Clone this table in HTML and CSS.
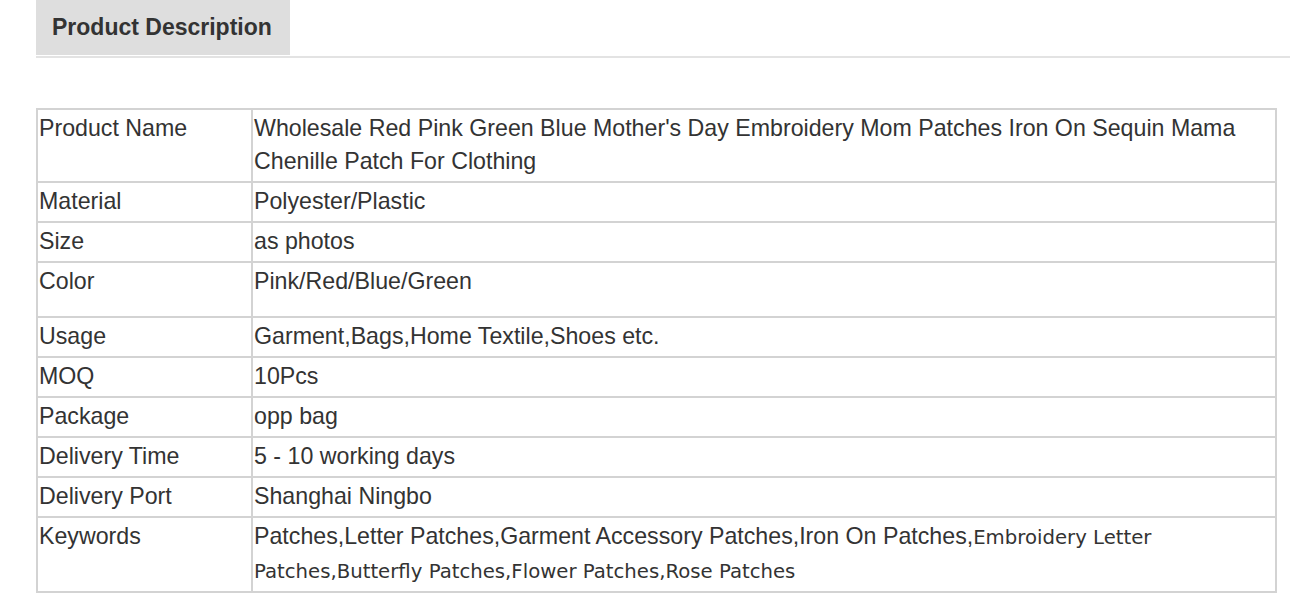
FILE: index.html
```html
<!DOCTYPE html>
<html>
<head>
<meta charset="utf-8">
<link rel="stylesheet" href="styles.css">
</head>
<body>
<div class="page">
  <div class="tabs">
    <div class="tab">Product Description</div>
  </div>
  <table class="spec">
    <tr class="r2"><td class="k">Product Name</td><td>Wholesale Red Pink Green Blue Mother's Day Embroidery Mom Patches Iron On Sequin Mama Chenille Patch For Clothing</td></tr>
    <tr><td class="k">Material</td><td>Polyester/Plastic</td></tr>
    <tr><td class="k">Size</td><td>as photos</td></tr>
    <tr class="tall"><td class="k">Color</td><td>Pink/Red/Blue/Green</td></tr>
    <tr><td class="k">Usage</td><td>Garment,Bags,Home Textile,Shoes etc.</td></tr>
    <tr><td class="k">MOQ</td><td>10Pcs</td></tr>
    <tr><td class="k">Package</td><td>opp bag</td></tr>
    <tr><td class="k">Delivery Time</td><td>5 - 10 working days</td></tr>
    <tr><td class="k">Delivery Port</td><td>Shanghai Ningbo</td></tr>
    <tr class="r2"><td class="k">Keywords</td><td>Patches,Letter Patches,Garment Accessory Patches,Iron On Patches,<span class="alt">Embroidery Letter Patches,Butterfly Patches,Flower Patches,Rose Patches</span></td></tr>
  </table>
</div>
</body>
</html>
```
FILE: styles.css
```css
html, body {
  margin: 0;
  padding: 0;
  background: #fff;
}
.page {
  padding-left: 36px;
  font-family: "Liberation Sans", Arial, sans-serif;
  color: #333;
}
.tabs {
  border-bottom: 2px solid #e3e3e3;
  height: 56px;
  margin-bottom: 50px;
}
.tab {
  display: inline-block;
  box-sizing: border-box;
  width: 254px;
  height: 55px;
  background: #dedede;
  font-weight: bold;
  font-size: 23px;
  line-height: 55px;
  padding-left: 16px;
  color: #333;
}
.spec {
  border-collapse: collapse;
  width: 1241px;
  font-size: 23.2px;
  line-height: 33px;
}
.spec td {
  border: 2px solid #d3d3d3;
  padding: 2px 1px 3px 1px;
  vertical-align: top;
  text-align: left;
}
.spec td.k {
  width: 211px;
}
.spec tr.tall td {
  height: 48px;
}
.alt {
  font-family: "DejaVu Sans", Verdana, sans-serif;
  font-size: 19.7px;
  line-height: 32px;
}
```
